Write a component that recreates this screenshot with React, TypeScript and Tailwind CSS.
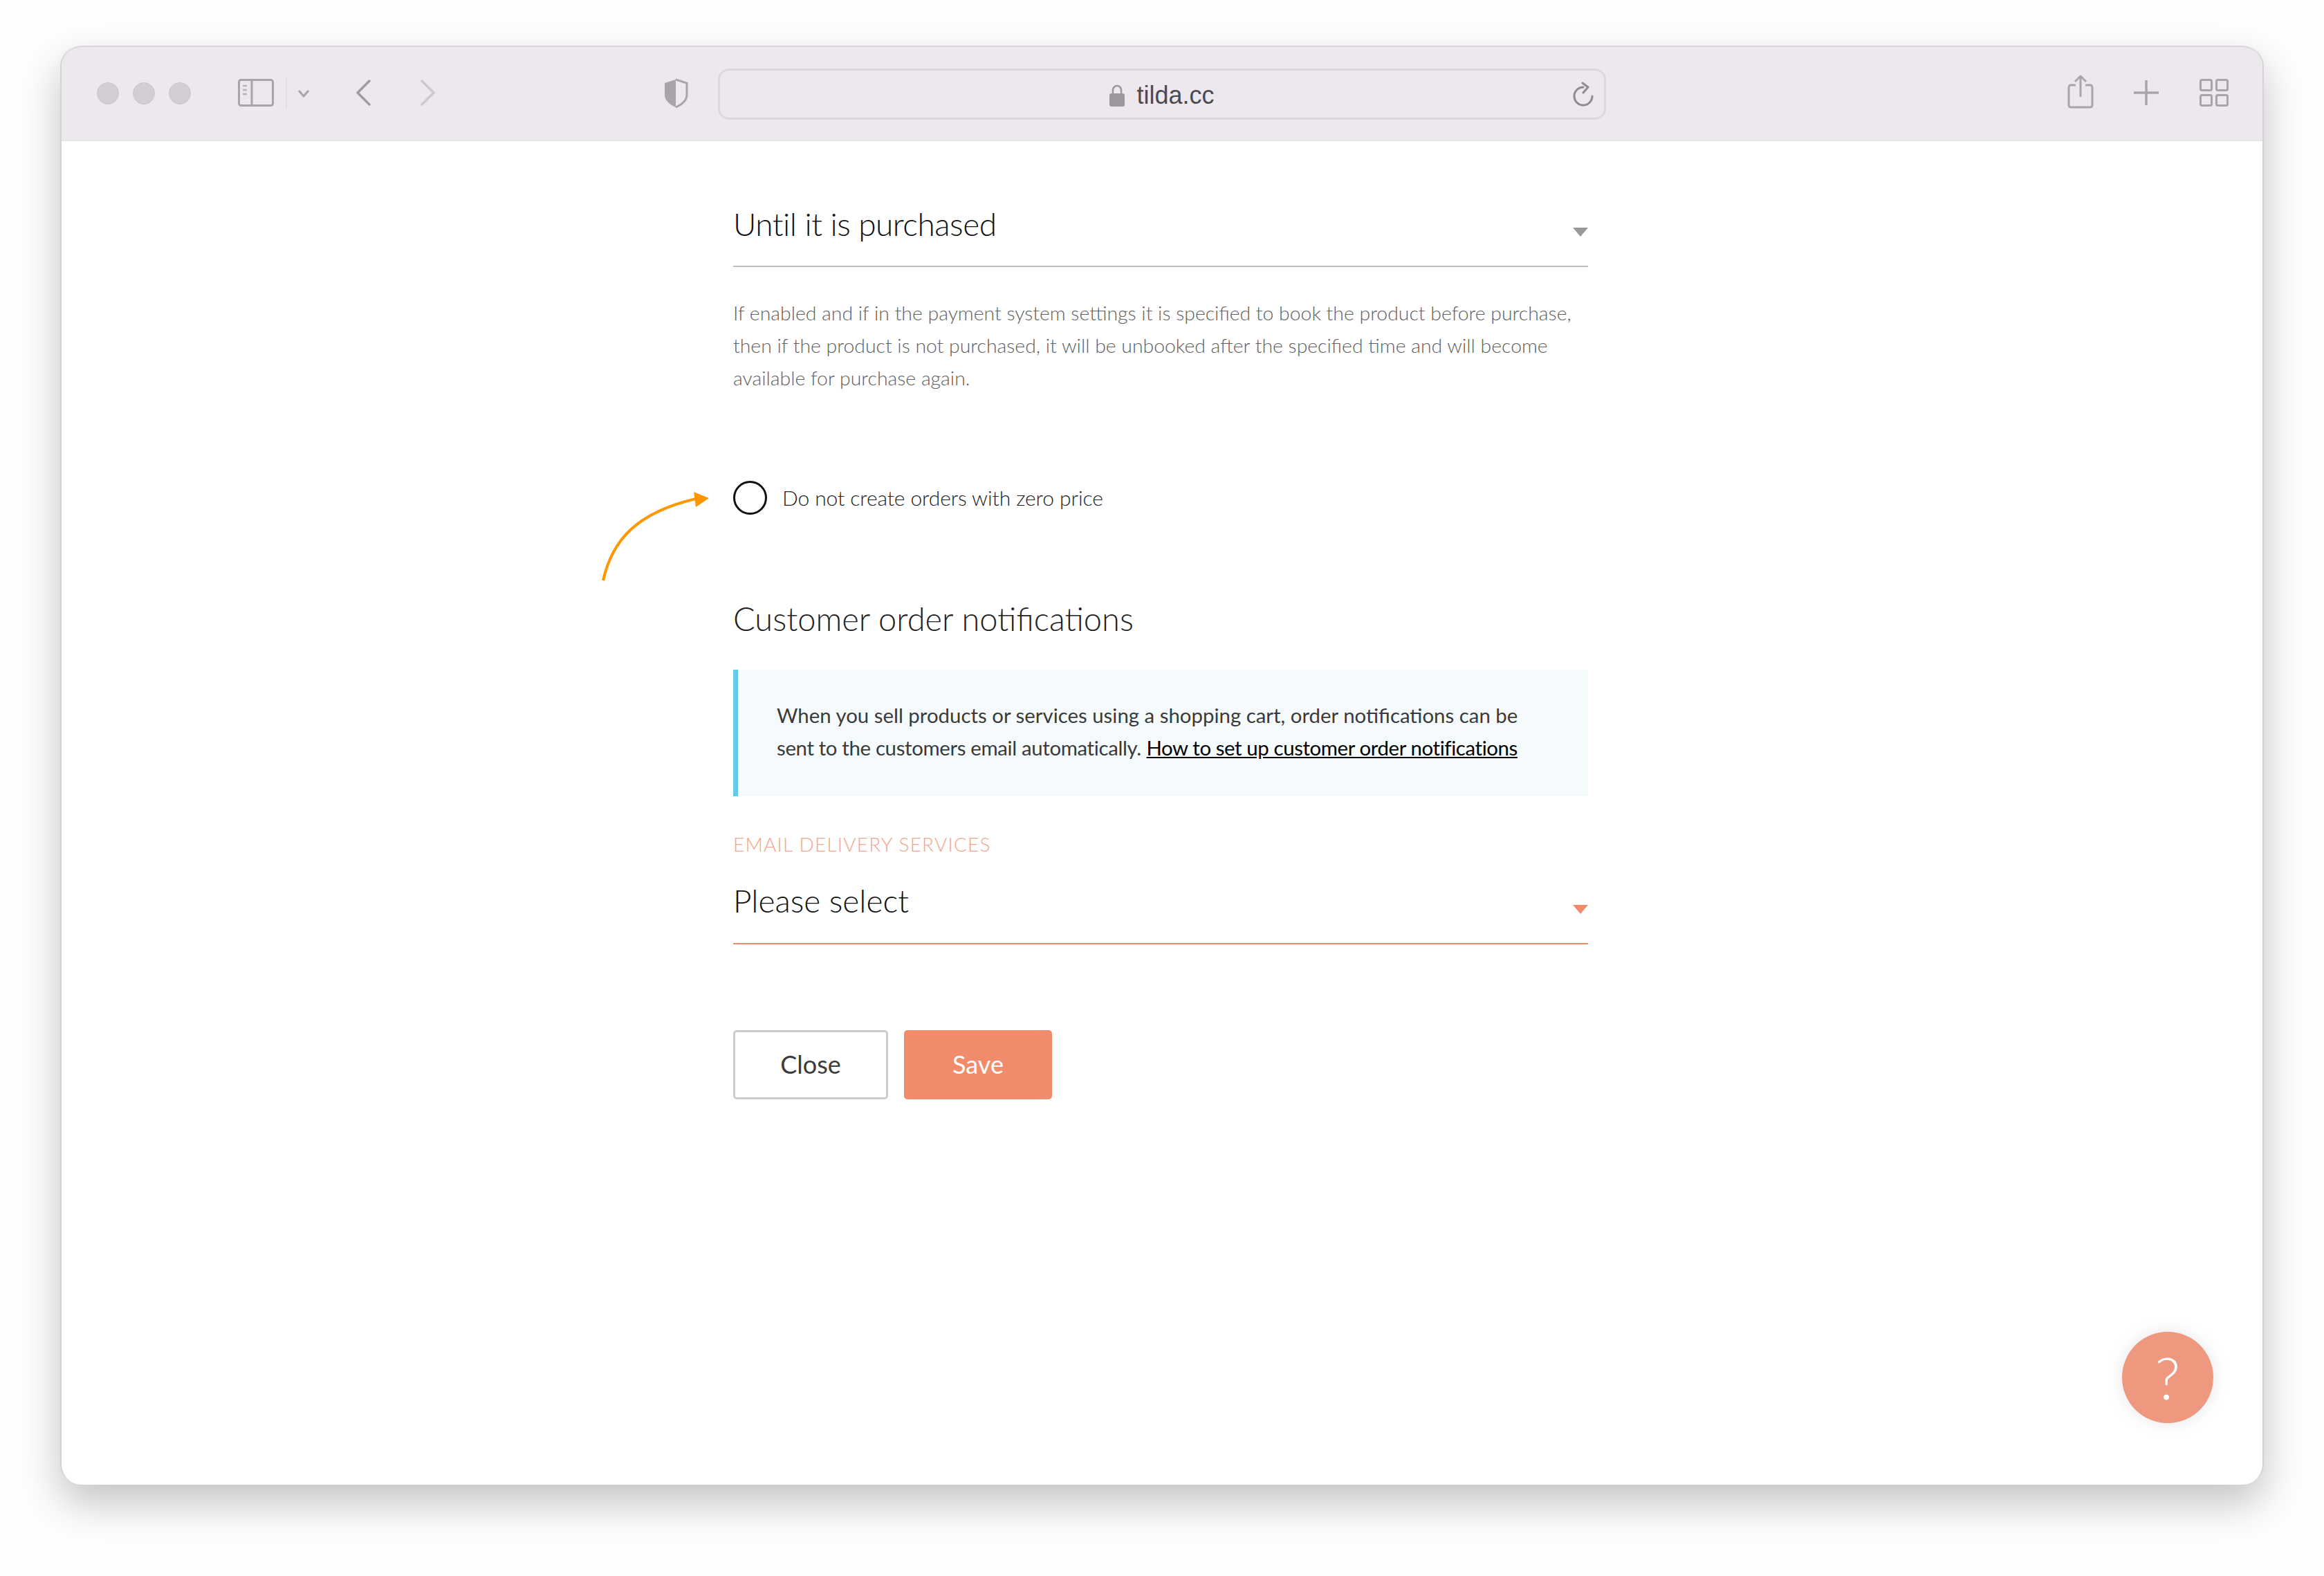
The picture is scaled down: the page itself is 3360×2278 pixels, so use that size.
import React from 'react';

const iconColor = '#a9a4ab';

const Caret = ({ className }: { className: string }) => (
  <div className={`w-0 h-0 border-x-[11px] border-t-[13px] border-x-transparent ${className}`}></div>
);

const Toolbar = () => (
  <div className="flex items-center h-[138px] bg-[#ede8ee] border-t-2 border-b-2 border-t-[#d8d6d9] border-b-[#e6e3e7] rounded-t-[30px] shrink-0">
    {/* traffic lights */}
    <div className="flex gap-[20px] ml-[51px]">
      <div className="w-[32px] h-[32px] rounded-full bg-[#d2ced4] border border-[#c8c4ca]"></div>
      <div className="w-[32px] h-[32px] rounded-full bg-[#d2ced4] border border-[#c8c4ca]"></div>
      <div className="w-[32px] h-[32px] rounded-full bg-[#d2ced4] border border-[#c8c4ca]"></div>
    </div>

    {/* sidebar toggle */}
    <svg className="ml-[68px] mb-[3px] shrink-0" width="52" height="40" viewBox="0 0 52 40" fill="none" stroke={iconColor} strokeWidth="3">
      <rect x="1.5" y="1.5" width="49" height="37" rx="3" />
      <path d="M20 2v36" />
      <path d="M7 10h6M7 16h6M7 22h6" strokeWidth="2.5" opacity="0.8" />
    </svg>
    <div className="ml-[17px] w-[2px] h-[46px] bg-[#e2dee4]"></div>
    <svg className="ml-[15px] shrink-0" width="18" height="12" viewBox="0 0 18 12" fill="none" stroke={iconColor} strokeWidth="3">
      <path d="M2 2l7 8 7-8" />
    </svg>

    {/* back / forward */}
    <svg className="ml-[65px] mb-[2px] shrink-0" width="24" height="38" viewBox="0 0 24 38" fill="none" stroke="#a09ba2" strokeWidth="3.5" strokeLinecap="round" strokeLinejoin="round">
      <path d="M21 2L4 19l17 17" />
    </svg>
    <svg className="ml-[70px] mb-[2px] shrink-0" width="24" height="38" viewBox="0 0 24 38" fill="none" stroke="#cdc9cf" strokeWidth="3.5" strokeLinecap="round" strokeLinejoin="round">
      <path d="M3 2l17 17L3 36" />
    </svg>

    {/* shield */}
    <svg className="ml-[327px] shrink-0" width="38" height="44" viewBox="0 0 38 44" fill="none">
      <path d="M19 2L3 7v17c0 8 7 14 16 18V2z" fill="#a9a4ab" />
      <path d="M19 2l16 5v17c0 8-7 14-16 18" stroke="#a9a4ab" strokeWidth="3" />
    </svg>

    {/* address bar */}
    <div className="ml-[42px] mt-[2px] w-[1284px] h-[74px] rounded-[16px] border-[3px] border-[#dcd8dd] flex items-center justify-center relative">
      <svg className="mt-[3px]" width="22" height="32" viewBox="0 0 22 32" fill="none">
        <path d="M5 14V8a6 6 0 0 1 12 0v6" stroke="#9b989c" strokeWidth="2.5" />
        <rect x="0" y="13" width="22" height="19" rx="3" fill="#9b989c" />
      </svg>
      <span className="ml-[17px] mt-[3px] text-[36px] leading-none font-['Liberation_Sans',sans-serif] text-[#4c4a4d]">tilda.cc</span>
      <svg className="absolute right-[14px] top-[15px]" width="34" height="38" viewBox="0 0 34 38" fill="none" stroke="#8f8b91" strokeWidth="3" strokeLinecap="round" strokeLinejoin="round">
        <path d="M18 9a13 13 0 1 0 13 13" />
        <path d="M17 3l8 6-7 8" />
      </svg>
    </div>

    {/* right side icons */}
    <svg className="ml-[667px] mb-[5px] shrink-0" width="38" height="50" viewBox="0 0 38 50" fill="none" stroke={iconColor} strokeWidth="3" strokeLinejoin="round">
      <path d="M12 15H5a3 3 0 0 0-3 3v26a3 3 0 0 0 3 3h28a3 3 0 0 0 3-3V18a3 3 0 0 0-3-3h-7" />
      <path d="M19 32V3M11 10l8-8 8 8" />
    </svg>
    <svg className="ml-[58px] mb-[3px] shrink-0" width="36" height="36" viewBox="0 0 36 36" fill="none" stroke={iconColor} strokeWidth="3.5">
      <path d="M18 0v36M0 18h36" />
    </svg>
    <svg className="ml-[59px] mb-[2px] shrink-0" width="42" height="40" viewBox="0 0 42 40" fill="none" stroke={iconColor} strokeWidth="3">
      <rect x="1.5" y="1.5" width="16" height="15" rx="2" />
      <rect x="24.5" y="1.5" width="16" height="15" rx="2" />
      <rect x="1.5" y="23.5" width="16" height="15" rx="2" />
      <rect x="24.5" y="23.5" width="16" height="15" rx="2" />
    </svg>
  </div>
);

export default function App() {
  return (
    <div className="w-[3360px] h-[2278px] bg-[#fefefe] pt-[66px] pl-[87px] font-['Lato',sans-serif] overflow-hidden">
      <div className="relative flex flex-col w-[3186px] h-[2080px] bg-white rounded-[30px] border-x-2 border-[#d4d2d5] shadow-[0_26px_60px_rgba(0,0,0,0.24)]">
        <Toolbar />

        <div className="w-[1236px] ml-[971px] pt-[90px]">
          {/* booking period select */}
          <div className="flex justify-between items-start pb-[30px] border-b-2 border-[#bdbdbd]">
            <span className="text-[46px] leading-[60px] font-light tracking-[-0.5px] text-[#111111]">Until it is purchased</span>
            <Caret className="mt-[35px] border-t-[#999999]" />
          </div>
          <p className="mt-[43px] text-[28.4px] leading-[47px] font-light whitespace-nowrap text-[#606060]">
            If enabled and if in the payment system settings it is specified to book the product before purchase,
            <br />
            then if the product is not purchased, it will be unbooked after the specified time and will become
            <br />
            available for purchase again.
          </p>

          {/* zero price checkbox */}
          <div className="mt-[125px] flex items-center gap-[22px]">
            <div className="w-[49px] h-[49px] rounded-full border-[3px] border-[#111111]"></div>
            <span className="text-[30px] leading-[47px] tracking-[-0.1px] text-[#222222] font-light">Do not create orders with zero price</span>
          </div>

          <h2 className="mt-[120px] text-[47px] leading-[60px] font-light text-[#222222]">Customer order notifications</h2>

          {/* info callout */}
          <div className="mt-[44px] h-[183px] pt-[42px] pl-[56px] bg-[#f5fafd] border-l-[7px] border-[#63cbe6] text-[29.4px] leading-[47px] font-normal text-[#3a3a3a] whitespace-nowrap">
            When you sell products or services using a shopping cart, order notifications can be
            <br />
            <span className="tracking-[-0.35px]">sent to the customers email automatically.</span>{' '}
            <a className="text-black underline tracking-[-0.4px]" href="#">How to set up customer order notifications</a>
          </div>

          {/* email service select */}
          <div className="mt-[54px] text-[28px] leading-[30px] font-light uppercase tracking-[1.2px] text-[#f4a58e]">Email delivery services</div>
          <div className="mt-[37px] flex justify-between items-start pb-[31px] border-b-2 border-[#f08a6a]">
            <span className="text-[46px] leading-[60px] font-light text-[#111111]">Please select</span>
            <Caret className="mt-[36px] border-t-[#f08a6a]" />
          </div>

          <div className="mt-[124px] flex gap-[23px]">
            <button className="w-[224px] h-[100px] pb-[3px] rounded-[5px] border-[3px] border-[#cccccc] bg-white text-[36px] font-normal text-[#3c3c3c]">Close</button>
            <button className="w-[214px] h-[100px] pb-[3px] rounded-[5px] bg-[#f08c6c] text-[36px] font-normal text-white">Save</button>
          </div>
        </div>

        {/* annotation arrow */}
        <svg className="absolute left-[771px] top-[630px]" width="180" height="160" viewBox="0 0 180 160" fill="none">
          <path d="M12 143C25 85 60 45 146 25" stroke="#ff9800" strokeWidth="4" />
          <path d="M143 15l22 9-19 13z" fill="#ff9800" />
        </svg>

        {/* help button */}
        <div className="absolute left-[2979px] top-[1859px] w-[132px] h-[132px] rounded-full bg-[#ef9880] shadow-[0_0_24px_rgba(0,0,0,0.1)] flex items-center justify-center text-white text-[84px] leading-none font-light">?</div>
      </div>
    </div>
  );
}
